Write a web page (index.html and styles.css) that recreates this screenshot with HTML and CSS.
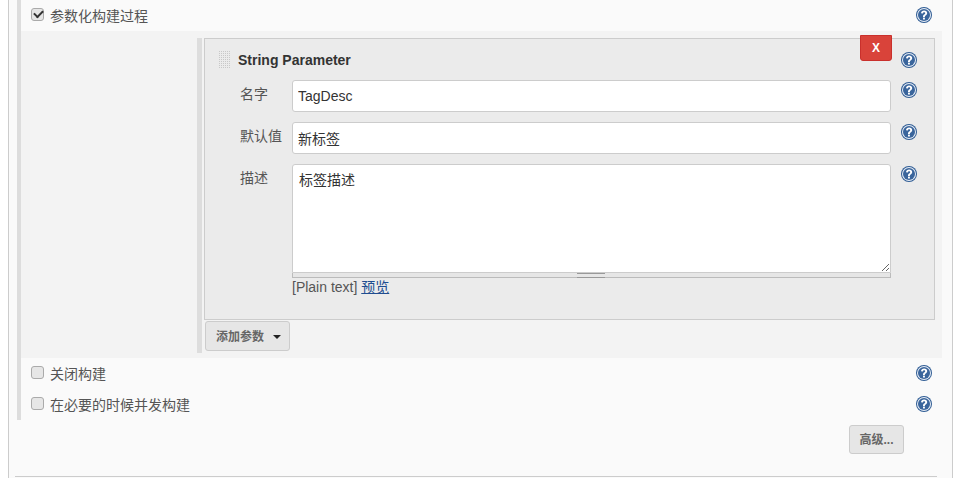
FILE: index.html
```html
<!DOCTYPE html>
<html lang="zh-CN">
<head>
  <meta charset="UTF-8" />
  <title>参数化构建过程</title>
  <link rel="stylesheet" href="styles.css">
</head>
<body>

<svg class="defs" width="0" height="0">
  <defs>
    <symbol id="help" viewBox="0 0 16 16">
      <circle cx="8" cy="8" r="8" fill="#2f5c94" />
      <circle cx="8" cy="8" r="7" fill="#e8eef6" />
      <circle cx="8" cy="8" r="6" fill="#3a659c" />
      <path d="M5 6.2 C5.1 4.3 6.5 3.4 8.1 3.4 C10 3.4 11.2 4.5 11.2 6 C11.2 7.2 10.5 7.8 9.7 8.4 C9 8.9 8.9 9.2 8.9 9.9 L7 9.9 C7 8.8 7.3 8.2 8.1 7.6 C8.9 7 9.2 6.7 9.2 6.2 C9.2 5.6 8.8 5.2 8.1 5.2 C7.4 5.2 7 5.7 6.9 6.5 Z" fill="#fff" />
      <rect x="7" y="10.6" width="1.9" height="1.9" fill="#fff" />
    </symbol>
  </defs>
</svg>

<div class="panel">
  <div class="section">
    <div class="row">
      <label class="check"><input type="checkbox" checked /><span>参数化构建过程</span></label>
      <svg class="help"><use href="#help" /></svg>
    </div>

    <div class="sub">
      <div class="params">
        <div class="card">
          <button class="delete">X</button>
          <div class="card-head">
            <span class="handle"></span>
            <b>String Parameter</b>
            <svg class="help"><use href="#help" /></svg>
          </div>
          <div class="field">
            <span class="field-label">名字</span>
            <input class="text" type="text" value="TagDesc" />
            <svg class="help"><use href="#help" /></svg>
          </div>
          <div class="field">
            <span class="field-label">默认值</span>
            <input class="text" type="text" value="新标签" />
            <svg class="help"><use href="#help" /></svg>
          </div>
          <div class="field">
            <span class="field-label">描述</span>
            <div class="area-wrap">
              <textarea class="area">标签描述</textarea>
              <div class="grippie"></div>
            </div>
            <svg class="help"><use href="#help" /></svg>
          </div>
          <div class="format">[Plain text] <a href="#">预览</a></div>
        </div>
        <button class="btn add">添加参数<i class="caret"></i></button>
      </div>
    </div>

    <div class="row">
      <label class="check"><input type="checkbox" /><span>关闭构建</span></label>
      <svg class="help"><use href="#help" /></svg>
    </div>
    <div class="row">
      <label class="check"><input type="checkbox" /><span>在必要的时候并发构建</span></label>
      <svg class="help"><use href="#help" /></svg>
    </div>
  </div>

  <div class="advanced"><button class="btn">高级...</button></div>
  <div class="rule"></div>
</div>

</body>
</html>
```

FILE: styles.css
```css
* {
  margin: 0;
  padding: 0;
  box-sizing: border-box;
}

body {
  background: #fff;
  color: #333;
  font-family: "Liberation Sans", "Noto Sans CJK SC", sans-serif;
  font-size: 14px;
  overflow: hidden;
}

.defs {
  display: block;
}

.panel {
  width: 945px;
  height: 478px;
  margin-left: 8px;
  padding-left: 8px;
  background: #fafafa;
  border-left: 1px solid #ccc;
  border-right: 1px solid #ccc;
  overflow: hidden;
}

.section {
  height: 420px;
  width: 925px;
  border-left: 4px solid #ddd;
}

.help {
  width: 16px;
  height: 16px;
  flex: none;
}

/* Checkbox rows */
.row {
  display: flex;
  align-items: center;
  justify-content: space-between;
  height: 31px;
  padding: 0 10px 1px 10px;
}

.check {
  display: flex;
  align-items: center;
  gap: 6px;
  color: #555;
}

.check input {
  appearance: none;
  width: 13px;
  height: 13px;
  background: #e6e6e6;
  border: 1px solid #aaa;
  border-radius: 3px;
  position: relative;
  top: -1px;
}

.check input:checked::after {
  content: "";
  display: block;
  width: 7px;
  height: 4px;
  margin: 1px 0 0 2px;
  border-left: 2px solid #333;
  border-bottom: 2px solid #333;
  transform: rotate(-45deg);
}

/* Nested block */
.sub {
  height: 327px;
  background: #f3f3f3;
  padding: 7px 7px 5px 176px;
}

.params {
  height: 100%;
  border-left: 5px solid #ddd;
  padding-left: 2px;
}

.card {
  position: relative;
  height: 282px;
  background: #ebebeb;
  border: 1px solid #ccc;
  padding: 0 17px 0 12px;
}

.delete {
  position: absolute;
  top: -4px;
  right: 42px;
  width: 32px;
  height: 26px;
  background: #d9433a;
  border: 1px solid #c9302c;
  border-radius: 0 0 3px 3px;
  color: #fff;
  font: bold 12px "Liberation Sans", sans-serif;
}

.card-head {
  display: flex;
  align-items: center;
  height: 41px;
  padding-top: 1px;
  color: #333;
}

.card-head b {
  flex: 1;
  margin-left: 8px;
}

.handle {
  width: 12px;
  height: 18px;
  margin-left: 1px;
  background: conic-gradient(#c8c8c8 25%, transparent 0) 0 0 / 2px 2px;
}

.field {
  display: flex;
  align-items: flex-start;
  margin-bottom: 11px;
}

.field-label {
  width: 75px;
  padding: 3px 0 0 23px;
  flex: none;
  white-space: nowrap;
  color: #555;
}

.field .help {
  margin: 2px 0 0 10px;
}

.field .text {
  width: 599px;
  height: 32px;
  margin-bottom: -1px;
  padding: 0 5px;
  background: #fff;
  border: 1px solid #ccc;
  border-radius: 3px;
  color: #333;
  font-family: inherit;
  font-size: 14px;
}

.area-wrap {
  width: 599px;
  height: 113px;
}

.area {
  display: block;
  width: 599px;
  height: 109px;
  padding: 7px 6px;
  background: #fff;
  border: 1px solid #ccc;
  border-radius: 3px 3px 0 0;
  color: #333;
  font-family: inherit;
  font-size: 14px;
  line-height: 16px;
}

.grippie {
  height: 5px;
  background: #e6e6e6;
  border: 1px solid #bbb;
  border-top: 0;
  position: relative;
}

.grippie::after {
  content: "";
  position: absolute;
  left: 284px;
  top: 0;
  width: 28px;
  height: 3px;
  border-top: 1px solid #999;
  border-bottom: 1px solid #999;
}

.format {
  margin: -11px 0 0 75px;
  color: #555;
  line-height: 20px;
}

.format a {
  color: #204d90;
}

/* Buttons */
.btn {
  height: 30px;
  padding: 0 10px 2px;
  background: #e6e6e6;
  border: 1px solid #ccc;
  border-radius: 3px;
  color: #666;
  font-family: inherit;
  font-size: 12px;
  font-weight: bold;
  white-space: nowrap;
}

.add {
  display: flex;
  align-items: center;
  width: 85px;
  height: 30px;
  margin: 1px 0 0 1px;
}

.caret {
  margin: 4px 0 0 9px;
  border-top: 4px solid #222;
  border-left: 4px solid transparent;
  border-right: 4px solid transparent;
}

.advanced {
  display: flex;
  justify-content: flex-end;
  padding: 5px 48px 0 0;
}

.advanced .btn {
  width: 55px;
  height: 29px;
  padding: 0 0 3px;
}

.rule {
  width: 922px;
  margin: 22px 0 0 -2px;
  border-top: 1px solid #ccc;
}
```
